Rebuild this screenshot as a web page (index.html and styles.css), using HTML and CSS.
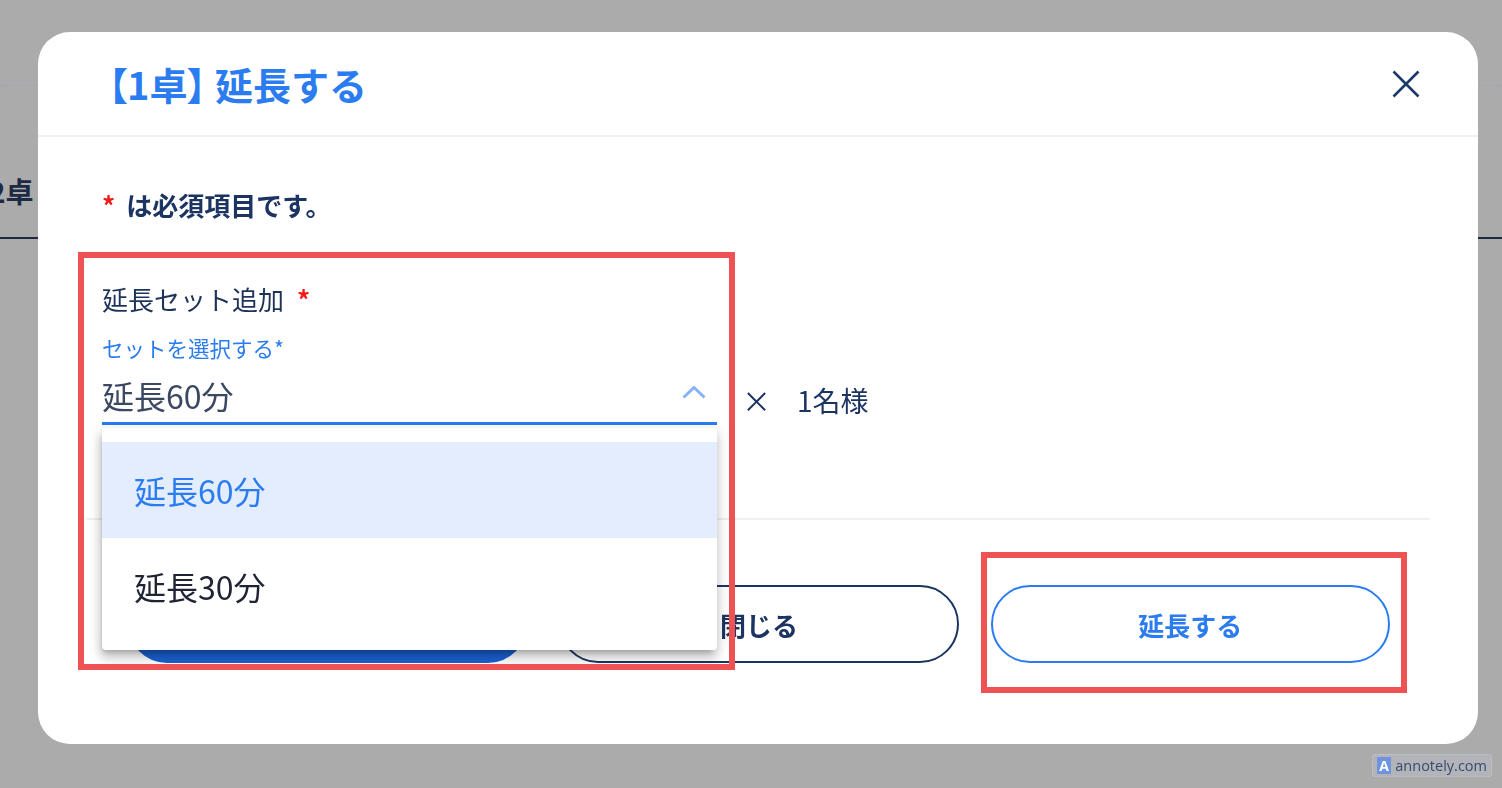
FILE: index.html
```html
<!DOCTYPE html>
<html lang="ja">
<head>
<meta charset="utf-8">
<title>延長する</title>
<link rel="stylesheet" href="styles.css">
</head>
<body>
  <div class="page">
    <div class="page-top"></div>
    <div class="page-tabs"><span class="page-tab">2卓</span></div>
  </div>

  <div class="modal-layer">
    <div class="modal">
      <header class="modal-header">
        <h1 class="modal-title"><span class="title-table">【1卓】</span> 延長する</h1>
        <button class="close-btn" aria-label="閉じる">
          <svg width="28" height="28" viewBox="0 0 28 28"><path d="M1.5 1.5 L26.5 26.5 M26.5 1.5 L1.5 26.5" stroke="#1b3a6b" stroke-width="2.6" fill="none"/></svg>
        </button>
      </header>

      <div class="modal-body">
        <p class="required-note"><span class="req-star">*</span>は必須項目です。</p>
        <div class="field-row">
          <div class="field">
            <div class="field-label">延長セット追加<span class="label-star">*</span></div>
            <div class="select-label">セットを選択する*</div>
            <div class="select-value">
              <span>延長60分</span>
              <svg class="chevron" width="24" height="14" viewBox="0 0 24 14"><polyline points="1.5,12.5 12,2.5 22.5,12.5" fill="none" stroke="#86b3f7" stroke-width="3"/></svg>
            </div>
          </div>
          <div class="multiplier"><span class="times">×</span><span>1名様</span></div>
        </div>
      </div>

      <footer class="modal-footer">
        <button class="btn btn-primary" aria-label="確定"></button>
        <button class="btn btn-outline-navy">閉じる</button>
        <button class="btn btn-outline-blue">延長する</button>
      </footer>

      <ul class="menu">
        <li class="menu-item selected">延長60分</li>
        <li class="menu-item">延長30分</li>
      </ul>

      <div class="annot annot-field"></div>
      <div class="annot annot-button"></div>
    </div>
  </div>

  <div class="badge"><span class="badge-icon">A</span><span class="badge-text">annotely.com</span></div>
</body>
</html>
```

FILE: styles.css
```css
* { box-sizing: border-box; }

html, body {
  margin: 0;
  height: 788px;
  overflow: hidden;
}

body {
  background: #ababab;
  font-family: "Noto Sans CJK JP", "Noto Sans", sans-serif;
}

.page-top {
  height: 86px;
  border-bottom: 1px dotted #9aa5b8;
}

.page-tabs {
  height: 153px;
  border-bottom: 2px solid #1d2940;
  display: flex;
  align-items: flex-end;
  padding-bottom: 29px;
}

.page-tab {
  margin-left: -11px;
  font-size: 28px;
  font-weight: 700;
  line-height: 34px;
  color: #1d2a44;
}

.modal-layer {
  position: fixed;
  inset: 0;
  padding: 32px 24px 44px 38px;
  display: flex;
}

.modal {
  flex: 1;
  position: relative;
  display: flex;
  flex-direction: column;
  background: #fff;
  border-radius: 32px;
}

.modal-header {
  height: 105px;
  border-bottom: 2px solid #f0f0f0;
  display: flex;
  align-items: center;
  justify-content: space-between;
  padding: 0 58px 0 70px;
}

.modal-title {
  margin: 0;
  font-size: 38px;
  line-height: 48px;
  font-weight: 700;
  color: #2b7cf0;
}

.title-table {
  font-feature-settings: "palt";
}

.close-btn {
  border: 0;
  background: none;
  padding: 0;
  width: 28px;
  height: 28px;
  display: flex;
}

.modal-body {
  padding: 50px 64px 93px;
}

.required-note {
  margin: 0;
  font-size: 26px;
  line-height: 36px;
  font-weight: 700;
  color: #1c3461;
}

.req-star {
  color: #f01c1c;
  margin-right: 11px;
}

.field-row {
  display: flex;
  align-items: flex-end;
  margin-top: 58px;
}

.field {
  width: 615px;
}

.field-label {
  font-size: 26px;
  line-height: 36px;
  color: #1f3359;
}

.label-star {
  color: #f01c1c;
  font-weight: 700;
  margin-left: 13px;
}

.select-label {
  margin-top: 17px;
  font-size: 21.5px;
  line-height: 28px;
  color: #2b7cf0;
}

.select-value {
  margin-top: 13px;
  display: flex;
  align-items: center;
  justify-content: space-between;
  padding: 0 11px 7px 0;
  border-bottom: 3px solid #2b7cf0;
  font-size: 32px;
  line-height: 40px;
  color: #3b4862;
}

.chevron {
  margin-top: -6px;
}

.multiplier {
  display: flex;
  align-items: center;
  gap: 26px;
  margin: 0 0 7px 25px;
  font-size: 28px;
  line-height: 36px;
  color: #1c3461;
}

.times {
  font-size: 29px;
}

.modal-footer {
  margin: 0 48px;
  border-top: 2px solid #f0f0f0;
  padding: 65px 40px 0 42px;
  display: flex;
  gap: 32px;
}

.btn {
  flex: 1;
  height: 78px;
  border-radius: 39px;
  font-family: inherit;
  font-size: 26px;
  font-weight: 700;
  background: #fff;
  padding: 0;
}

.btn-primary {
  background: #1b61d3;
  border: 2px solid #1b61d3;
}

.btn-outline-navy {
  border: 2px solid #1c3461;
  color: #1c3461;
}

.btn-outline-blue {
  border: 2px solid #2b7cf0;
  color: #2b7cf0;
}

.menu {
  position: absolute;
  left: 64px;
  top: 396px;
  width: 615px;
  margin: 0;
  padding: 14px 0 16px;
  list-style: none;
  background: #fff;
  border-radius: 4px;
  box-shadow: -2px 5px 5px -3px rgba(0,0,0,.2), -1px 8px 10px 1px rgba(0,0,0,.14), 0 3px 14px 2px rgba(0,0,0,.12);
}

.menu-item {
  height: 96px;
  display: flex;
  align-items: center;
  padding-left: 32px;
  font-size: 32px;
  color: #1e2433;
}

.menu-item.selected {
  background: #e3edfd;
  color: #2b7cf0;
}

.annot {
  position: absolute;
  border: 6px solid #ee5253;
}

.annot-field {
  left: 40px;
  top: 220px;
  width: 657px;
  height: 418px;
}

.annot-button {
  left: 943px;
  top: 520px;
  width: 426px;
  height: 141px;
}

.badge {
  position: fixed;
  right: 10px;
  bottom: 11px;
  width: 120px;
  height: 23px;
  display: flex;
  align-items: center;
  gap: 4px;
  padding: 0 4px;
  background: #b2b4ba;
  border: 1px dotted #c6c8cf;
  border-radius: 3px;
}

.badge-icon {
  width: 15px;
  height: 17px;
  background: #6f93de;
  color: #fff;
  font-family: "Open Sans", sans-serif;
  font-weight: 700;
  font-size: 14px;
  line-height: 17px;
  text-align: center;
}

.badge-text {
  font-family: "Open Sans", sans-serif;
  font-size: 14.5px;
  color: #3b4a6b;
  line-height: 20px;
  white-space: nowrap;
}
```
